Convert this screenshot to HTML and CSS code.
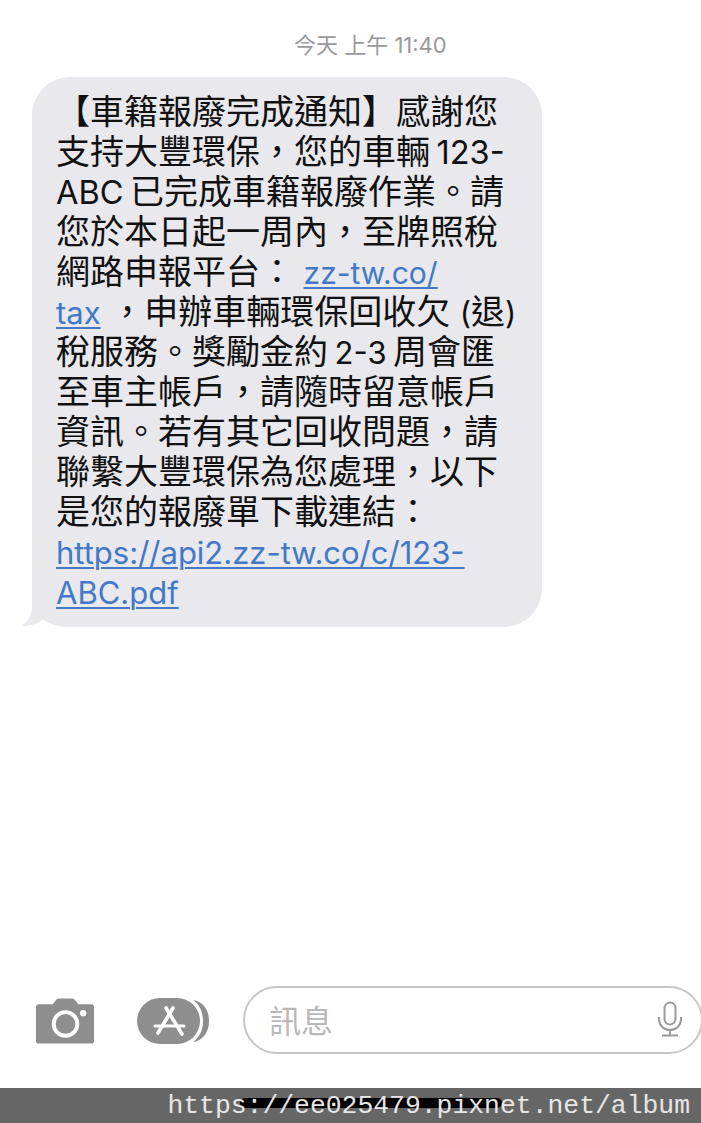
FILE: index.html
```html
<!DOCTYPE html>
<html lang="zh-Hant">
<head>
<meta charset="utf-8">
<title>訊息</title>
<link rel="stylesheet" href="styles.css">
</head>
<body>
<main class="screen">
  <header class="time">今天 上午 11:40</header>
  <section class="bubble">
    <svg class="tail" width="52" height="40" viewBox="0 0 52 40"><path d="M11 0 V20 C11 28 7 34 1 39 C9 39.500 16 37 22 32.500 C28 37 36 40 50 40 V0 Z" fill="#e8e8ed"/></svg>
    <p class="line">【車籍報廢完成通知】感謝您</p>
    <p class="line">支持大豐環保，您的車輛 <span class="lat lat-wide">123-</span></p>
    <p class="line"><span class="lat lat-wide">ABC</span> 已完成車籍報廢作業。請</p>
    <p class="line">您於本日起一周內，至牌照稅</p>
    <p class="line line-open">網路申報平台： <a class="link lat lat-narrow" href="#">zz-tw.co/</a></p>
    <p class="line line-open"><a class="link lat" href="#">tax</a> ，申辦車輛環保回收欠 <span class="lat">(</span>退<span class="lat">)</span></p>
    <p class="line">稅服務。獎勵金約 <span class="lat">2-3</span> 周會匯</p>
    <p class="line">至車主帳戶，請隨時留意帳戶</p>
    <p class="line">資訊。若有其它回收問題，請</p>
    <p class="line">聯繫大豐環保為您處理，以下</p>
    <p class="line">是您的報廢單下載連結：</p>
    <p class="line"><a class="link lat" href="#">https://api2.zz-tw.co/c/123-</a></p>
    <p class="line"><a class="link lat" href="#">ABC.pdf</a></p>
  </section>
  <div class="spacer"></div>
  <section class="composer">
    <svg class="camera" width="59" height="46" viewBox="0 0 60 46">
      <path d="M3 6 H17 L21 1 Q22 0 24 0 H36 Q38 0 39 1 L43 6 H56 Q59 6 59 9 V43 Q59 46 56 46 H3 Q0 46 0 43 V9 Q0 6 3 6 Z" fill="#8e8e8e"/>
      <circle cx="30" cy="26" r="12" fill="none" stroke="#fff" stroke-width="4"/>
      <circle cx="48" cy="15" r="3.200" fill="#fff"/>
    </svg>
    <svg class="store" width="74" height="48" viewBox="0 0 74 48">
      <path d="M56 3 C68 5 72 15 72 24 C72 33 68 43 56 45 C64 39 66 31 66 24 C66 17 64 9 56 3 Z" fill="#8e8e8e"/>
      <rect x="0" y="1" width="63" height="46" rx="23" fill="#8e8e8e"/>
      <g fill="none" stroke="#fff" stroke-linecap="round">
        <path d="M36 11 L21 36" stroke-width="3.600"/>
        <path d="M29 11 L45 37" stroke-width="3.600"/>
        <path d="M18 29 H47" stroke-width="3"/>
      </g>
    </svg>
    <div class="field">
      <span class="placeholder">訊息</span>
      <svg class="mic" width="26" height="36" viewBox="0 0 26 36" fill="none" stroke="#9a9a9a" stroke-width="2">
        <rect x="7.500" y="1.500" width="11" height="22" rx="5.500"/>
        <path d="M2 16 V18 C2 24.500 7 29 13 29 C19 29 24 24.500 24 18 V16 M13 29 V34 M5 34.500 H21"/>
      </svg>
    </div>
  </section>
  <footer class="watermark">
    <span class="home"></span>
    <span class="url">https://ee025479.pixnet.net/album</span>
  </footer>
</main>
</body>
</html>
```
FILE: styles.css
```css
* { box-sizing: border-box; }
html, body { margin: 0; padding: 0; background: #fff; }
.screen {
  width: 701px;
  height: 1123px;
  display: flex;
  flex-direction: column;
  overflow: hidden;
  font-family: Inter, "Noto Sans CJK JP", sans-serif;
}
.time {
  margin-top: 31px;
  height: 28px;
  line-height: 28px;
  padding-left: 294px;
  font-size: 22px;
  color: #98989c;
  white-space: nowrap;
}
.bubble {
  position: relative;
  margin: 18px 0 0 32px;
  width: 510px;
  height: 550px;
  padding: 15px 0 0 24px;
  background: #e8e8ed;
  border-radius: 38px;
}
.tail { position: absolute; left: -11px; bottom: 0; }
.line {
  position: relative;
  margin: 0;
  height: 40px;
  line-height: 40px;
  font-size: 34px;
  word-spacing: -3px;
  color: #111;
  white-space: nowrap;
}
.line-open { word-spacing: 0; }
.lat { font-size: 31px; }
.lat-wide { font-size: 32.5px; }
.lat-narrow { font-size: 30px; }
.link { color: #4278c8; text-decoration: underline; text-decoration-thickness: 2px; text-underline-offset: 3px; }
.spacer { flex: 1; }
.composer {
  display: flex;
  align-items: center;
  height: 68px;
  padding-left: 36px;
  margin-bottom: 34px;
}
.camera { flex: none; margin-top: 2px; }
.store { flex: none; margin: 2px 0 0 42px; }
.field {
  flex: none;
  width: 460px;
  height: 68px;
  margin-left: 32px;
  display: flex;
  align-items: center;
  justify-content: space-between;
  padding: 0 18px 2px 24px;
  border: 2px solid #c6c6c6;
  border-radius: 34px;
}
.placeholder { font-size: 32px; color: #b8b8b8; }
.mic { flex: none; }
.watermark {
  position: relative;
  flex: none;
  height: 35px;
  background: #666;
  display: flex;
  justify-content: flex-end;
  align-items: center;
  padding-right: 11px;
}
.home {
  position: absolute;
  left: 240px;
  top: 10px;
  width: 262px;
  height: 10px;
  border-radius: 5px;
  background: #000;
}
.url {
  position: relative;
  top: 1px;
  font-family: "Liberation Mono", monospace;
  font-size: 26.4px;
  line-height: 35px;
  color: #e6e6e6;
  white-space: nowrap;
}
```
